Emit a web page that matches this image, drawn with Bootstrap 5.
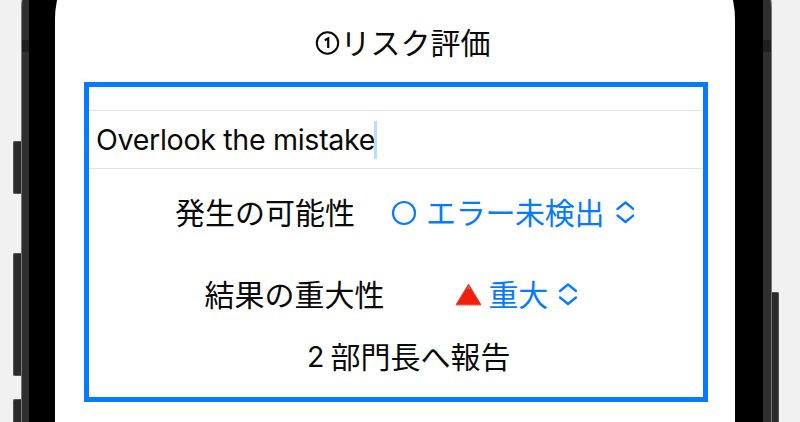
<!DOCTYPE html>
<html lang="ja">
<head>
<meta charset="utf-8">
<meta name="viewport" content="width=device-width, initial-scale=1">
<title>リスク評価</title>
<link href="https://cdn.jsdelivr.net/npm/bootstrap@5.3.0/dist/css/bootstrap.min.css" rel="stylesheet">
<style>
  body { background: #f1f1f1; color: #0a0a0a; font-family: Inter, "Noto Sans CJK JP", sans-serif; font-size: 30px; line-height: 44px; height: 422px; }
  .side-left { width: 21px; padding-top: 141px; }
  .side-right { width: 28px; padding-top: 292px; }
  .side-key { background: #2b2b2b; border: 1px solid #555; border-right-width: 0; width: 8px; border-radius: 2px 0 0 2px; }
  .key-mute { height: 53px; margin-bottom: 59px; }
  .key-up { height: 123px; margin-bottom: 23px; }
  .key-down { height: 23px; border-bottom-width: 0; border-radius: 2px 0 0 0; }
  .key-power { height: 130px; width: 7px; border-width: 1px 1px 0 0; border-radius: 0 2px 0 0; }
  .phone { width: 751px; height: 502px; margin-top: -80px; background: linear-gradient(#1f1f1f, #1f1f1f) 0 119px / 100% 12px no-repeat #2f2f2f; border: 1px solid #777; border-bottom: 0; border-radius: 90px 90px 0 0; padding: 0 8px 0 7px; }
  .bezel { height: 100%; background: #000; border-radius: 80px 80px 0 0; padding: 12px 28px 0 26px; }
  .screen { height: 100%; border-radius: 86px 86px 0 0; padding: 88px 27px 0 29px; }
  .page-title { font-size: 30px; line-height: 44px; font-weight: 400; height: 61px; padding-left: 13px; }
  .risk-panel { border: 5px solid #067bff; height: 320px; padding-top: 23px; }
  .risk-input { height: 59px; border-top: 1px solid #e3e3e3; border-bottom: 1px solid #e3e3e3; padding-left: 7px; font-size: 28.6px; }
  .entry { letter-spacing: -.32px; }
  .caret { width: 3px; height: 38px; background: #bcdcff; margin-left: -1px; }
  .likelihood { height: 44px; margin-top: 22px; padding-left: 86px; }
  .severity { height: 44px; margin-top: 38px; padding-left: 115.5px; }
  .pick { color: #067bff; }
  .pick-label { letter-spacing: -.3px; }
  .result { margin-top: 18px; padding-left: 218px; }
  .num { font-size: 28.5px; margin-right: 6px; }
</style>
<script src="https://cdn.jsdelivr.net/npm/bootstrap@5.3.0/dist/js/bootstrap.bundle.min.js"></script>
</head>
<body class="d-flex overflow-hidden">
  <div class="side-left d-flex flex-column align-items-end flex-shrink-0">
    <div class="side-key key-mute flex-shrink-0"></div>
    <div class="side-key key-up flex-shrink-0"></div>
    <div class="side-key key-down flex-shrink-0"></div>
  </div>
  <div class="phone flex-shrink-0">
    <div class="bezel">
      <main class="screen bg-white">
        <h1 class="page-title d-flex justify-content-center m-0"><svg width="26" height="44" viewBox="0 0 26 44" fill="none" stroke="#0a0a0a" stroke-width="2" role="img" aria-label="1"><circle cx="12.5" cy="22" r="10.7"/><path d="M9.8 19.2l3.4-1.8v9.6" stroke-width="2.2"/></svg><span>リスク評価</span></h1>
        <section class="risk-panel">
          <div class="risk-input d-flex align-items-center"><span class="entry">Overlook the mistake</span><span class="caret"></span></div>
          <div class="likelihood d-flex">
            <span>発生の可能性</span>
            <span class="pick d-flex"><svg width="71" height="44" viewBox="0 0 71 44" fill="none" stroke="currentColor" stroke-width="2.2"><circle cx="49" cy="22" r="11"/></svg><span class="pick-label">エラー未検出</span><svg width="30" height="44" viewBox="0 0 30 44" fill="none" stroke="currentColor" stroke-width="2.3" stroke-linejoin="round" stroke-linecap="round"><path d="M13.5 18l8-6.5 8 6.5M13.5 24.5l8 6.5 8-6.5"/></svg></span>
          </div>
          <div class="severity d-flex">
            <span>結果の重大性</span>
            <span class="pick d-flex"><svg width="104" height="44" viewBox="0 0 104 44"><path d="M71 31.8L83.5 11.2 96 31.8Z" fill="#f21f0c" stroke="#d7483a" stroke-linejoin="round"/><path d="M72 32.5H95" stroke="#ee8b80" stroke-dasharray="1 1"/><path d="M82.5 16l1-2.5 1 2.5" fill="none" stroke="#d2766c"/></svg><span class="pick-label">重大</span><svg width="31" height="44" viewBox="0 0 31 44" fill="none" stroke="currentColor" stroke-width="2.3" stroke-linejoin="round" stroke-linecap="round"><path d="M12 18l8-6.5 8 6.5M12 24.5l8 6.5 8-6.5"/></svg></span>
          </div>
          <div class="result d-flex"><span class="num">2</span><span>部門長へ報告</span></div>
        </section>
      </main>
    </div>
  </div>
  <div class="side-right flex-shrink-0"><div class="side-key key-power"></div></div>
</body>
</html>
